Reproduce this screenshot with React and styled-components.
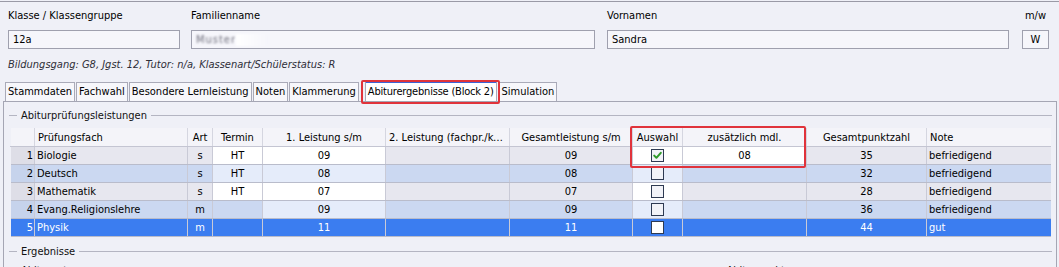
import React from "react";
import styled, { createGlobalStyle } from "styled-components";

const GlobalStyle = createGlobalStyle`
  html, body { margin: 0; padding: 0; }
  body {
    background: #eff0f7;
    font-family: "DejaVu Sans Condensed", "DejaVu Sans", sans-serif;
    font-stretch: condensed;
    font-size: 11px;
    color: #000;
    overflow: hidden;
  }
`;

const Window = styled.div`
  position: relative;
  width: 1059px;
  height: 267px;
  box-sizing: border-box;
  border-top: 1px solid #9a9aa6;
  margin-top: 1px;
  overflow: hidden;
`;

const HeaderGrid = styled.div`
  display: grid;
  grid-template-columns: 172px 404px 403px 29px;
  column-gap: 11px;
  padding: 7px 0 0 8px;
  & > :nth-child(3) { margin-left: 1px; }
  & > :nth-child(4) { margin-left: 2px; }
`;

const Field = styled.div`
  display: flex;
  flex-direction: column;
  gap: 7px;
`;

const Label = styled.div`
  height: 14px;
  line-height: 14px;
  white-space: nowrap;
  text-align: ${(p) => (p.$center ? "center" : "left")};
`;

const Input = styled.div`
  height: 19px;
  box-sizing: border-box;
  border: 1px solid #9fa0ae;
  background: #f6f6fb;
  padding: 0 4px;
  line-height: 17px;
  white-space: nowrap;
  overflow: hidden;
  text-align: ${(p) => (p.$center ? "center" : "left")};
`;

const Blurred = styled.span`
  display: inline-block;
  color: #6f6f7c;
  filter: blur(1.3px);
  letter-spacing: 1px;
`;

const Fade = styled.span`
  display: inline-block;
  width: 30px;
  height: 12px;
  vertical-align: middle;
  background: linear-gradient(90deg, #ffffff, #f6f6fb);
  filter: blur(1px);
`;

const Info = styled.div`
  padding: 8px 0 0 8px;
  height: 15px;
  line-height: 15px;
  font-style: italic;
  color: #2e2e38;
`;

const TabRow = styled.div`
  display: flex;
  align-items: flex-end;
  gap: 1px;
  padding: 8px 0 0 5px;
  height: 21px;
`;

const Tab = styled.div`
  height: ${(p) => (p.$active ? "21px" : "19px")};
  box-sizing: border-box;
  padding: 0 2px;
  line-height: 17px;
  border: 1px solid #a9aab8;
  border-bottom: none;
  background: ${(p) => (p.$active ? "#ffffff" : "#f7f7fb")};
  border-top: ${(p) => (p.$active ? "3px solid #3b63d6" : "1px solid #a9aab8")};
  letter-spacing: ${(p) => (p.$active ? "-0.2px" : "0")};
  white-space: nowrap;
  margin-left: ${(p) => (p.$active ? "5px" : "0")};
  margin-right: ${(p) => (p.$active ? "1px" : "0")};
`;

const RedBox = styled.div`
  position: absolute;
  left: ${(p) => p.$x}px;
  top: ${(p) => p.$y}px;
  width: ${(p) => p.$w}px;
  height: ${(p) => p.$h}px;
  box-sizing: border-box;
  border: 2px solid #e0333b;
  border-radius: 2px;
  pointer-events: none;
`;

const Panel = styled.div`
  margin: 0 2px 0 3px;
  border: 1px solid #a5a6b4;
  border-bottom: none;
  height: 200px;
  padding: 5px 4px 0 5px;
`;

const Group = styled.div`
  display: flex;
  align-items: center;
  gap: 4px;
  height: 16px;
  color: #111;
  margin-top: ${(p) => p.$top || 0}px;
  &::before {
    content: "";
    width: 8px;
    border-top: 1px solid #b4b5c2;
  }
  &::after {
    content: "";
    flex: 1;
    border-top: 1px solid #b4b5c2;
  }
`;

const TableWrap = styled.div`
  margin: 5px 0 0 1px;
  width: 1040px;
`;

const Table = styled.table`
  border-collapse: collapse;
  table-layout: fixed;
  width: 1040px;
`;

const HeadCell = styled.th`
  height: 18px;
  padding: 0 3px;
  font-weight: normal;
  background: #f4f4f9;
  border-left: 1px solid ${(p) => (p.$first ? "transparent" : "#d5d6e0")};
  border-bottom: 1px solid #c4c5d2;
  text-align: ${(p) => p.$align || "center"};
  white-space: nowrap;
  overflow: hidden;
  text-overflow: ellipsis;
`;

const rowBg = (kind) =>
  kind === "sel" ? "#3b7df0" : kind === "even" ? "#cbd8f1" : "#e7e7ef";
const editBg = (kind) =>
  kind === "sel" ? "#3b7df0" : kind === "even" ? "#e5ecfa" : "#ffffff";

const Row = styled.tr`
  height: 18px;
  color: ${(p) => (p.$kind === "sel" ? "#ffffff" : "#000")};
`;

const Cell = styled.td`
  height: 17px;
  padding: 0 2px;
  line-height: 17px;
  border-left: 1px solid #c9cad6;
  border-bottom: 1px solid #b9bccb;
  background: ${(p) => (p.$edit ? editBg(p.$kind) : rowBg(p.$kind))};
  text-align: ${(p) => p.$align || "center"};
  white-space: nowrap;
  overflow: hidden;
`;

const IndexCell = styled(Cell)`
  border-left: none;
  padding: 0 1px 0 0;
  background: ${(p) =>
    p.$kind === "sel" ? "#3b7df0" : p.$kind === "even" ? "#c6d3ec" : "#dedee7"};
`;

const Check = styled.span`
  display: inline-block;
  width: 11px;
  height: 11px;
  margin-top: 2px;
  vertical-align: top;
  border: 1px solid #2e3a52;
  background: ${(p) => (p.$light ? "#ffffff" : "#f2f3f8")};
  position: relative;
`;

const columns = [
  { w: 24, label: "", align: "left" },
  { w: 153, label: "Prüfungsfach", align: "left" },
  { w: 25, label: "Art" },
  { w: 50, label: "Termin" },
  { w: 123, label: "1. Leistung s/m" },
  { w: 124, label: "2. Leistung (fachpr./kombiniert) s/m" },
  { w: 123, label: "Gesamtleistung s/m" },
  { w: 50, label: "Auswahl" },
  { w: 124, label: "zusätzlich mdl." },
  { w: 120, label: "Gesamtpunktzahl" },
  { w: 124, label: "Note", align: "left" },
];

const rows = [
  { n: 1, fach: "Biologie", art: "s", termin: "HT", l1: "09", ges: "09", checked: true, mdl: "08", pkt: "35", note: "befriedigend", kind: "odd" },
  { n: 2, fach: "Deutsch", art: "s", termin: "HT", l1: "08", ges: "08", pkt: "32", note: "befriedigend", kind: "even" },
  { n: 3, fach: "Mathematik", art: "s", termin: "HT", l1: "07", ges: "07", pkt: "28", note: "befriedigend", kind: "odd" },
  { n: 4, fach: "Evang.Religionslehre", art: "m", termin: "", l1: "09", ges: "09", pkt: "36", note: "befriedigend", kind: "even" },
  { n: 5, fach: "Physik", art: "m", termin: "", l1: "11", ges: "11", pkt: "44", note: "gut", kind: "sel" },
];

const CheckMark = () => (
  <svg width="11" height="11" viewBox="0 0 11 11" style={{ position: "absolute", left: 0, top: 0 }}>
    <path d="M2.2 5.6 L4.4 7.8 L8.8 2.8" fill="none" stroke="#2f9a2a" strokeWidth="2" strokeLinecap="round" strokeLinejoin="round" />
  </svg>
);

const BottomLabels = styled.div`
  display: flex;
  justify-content: space-between;
  width: 770px;
  padding: 5px 0 0 12px;
  color: #111;
`;

export default function App() {
  return (
    <>
      <GlobalStyle />
      <Window>
        <HeaderGrid>
          <Field>
            <Label>Klasse / Klassengruppe</Label>
            <Input>12a</Input>
          </Field>
          <Field>
            <Label>Familienname</Label>
            <Input>
              <Blurred>Muster</Blurred>
              <Fade />
            </Input>
          </Field>
          <Field>
            <Label>Vornamen</Label>
            <Input>Sandra</Input>
          </Field>
          <Field>
            <Label $center>m/w</Label>
            <Input $center>W</Input>
          </Field>
        </HeaderGrid>
        <Info>Bildungsgang: G8, Jgst. 12, Tutor: n/a, Klassenart/Schülerstatus: R</Info>
        <TabRow>
          <Tab>Stammdaten</Tab>
          <Tab>Fachwahl</Tab>
          <Tab>Besondere Lernleistung</Tab>
          <Tab>Noten</Tab>
          <Tab>Klammerung</Tab>
          <Tab $active>Abiturergebnisse (Block 2)</Tab>
          <Tab>Simulation</Tab>
        </TabRow>
        <Panel>
          <Group>Abiturprüfungsleistungen</Group>
          <TableWrap>
            <Table>
              <colgroup>
                {columns.map((c, i) => (
                  <col key={i} style={{ width: c.w }} />
                ))}
              </colgroup>
              <thead>
                <tr>
                  {columns.map((c, i) => (
                    <HeadCell key={i} $first={i === 0} $align={c.align}>
                      {c.label}
                    </HeadCell>
                  ))}
                </tr>
              </thead>
              <tbody>
                {rows.map((r) => {
                  const k = r.kind;
                  const editable = r.n <= 3;
                  return (
                    <Row key={r.n} $kind={k}>
                      <IndexCell $kind={k} $align="right">{r.n}</IndexCell>
                      <Cell $kind={k} $align="left">{r.fach}</Cell>
                      <Cell $kind={k}>{r.art}</Cell>
                      <Cell $kind={k} $edit={editable}>{r.termin}</Cell>
                      <Cell $kind={k} $edit>{r.l1}</Cell>
                      <Cell $kind={k}></Cell>
                      <Cell $kind={k}>{r.ges}</Cell>
                      <Cell $kind={k} $edit={k !== "sel"}>
                        <Check $light={k === "sel"}>{r.checked && <CheckMark />}</Check>
                      </Cell>
                      <Cell $kind={k} $edit={r.n === 1}>{r.mdl || ""}</Cell>
                      <Cell $kind={k}>{r.pkt}</Cell>
                      <Cell $kind={k} $align="left">{r.note}</Cell>
                    </Row>
                  );
                })}
              </tbody>
            </Table>
          </TableWrap>
          <Group $top={6}>Ergebnisse</Group>
          <BottomLabels>
            <span>Abiturnote</span>
            <span>Abiturpunkte</span>
          </BottomLabels>
        </Panel>
        <RedBox $x={361} $y={78} $w={139} $h={24} />
        <RedBox $x={630} $y={124} $w={176} $h={42} />
      </Window>
    </>
  );
}
